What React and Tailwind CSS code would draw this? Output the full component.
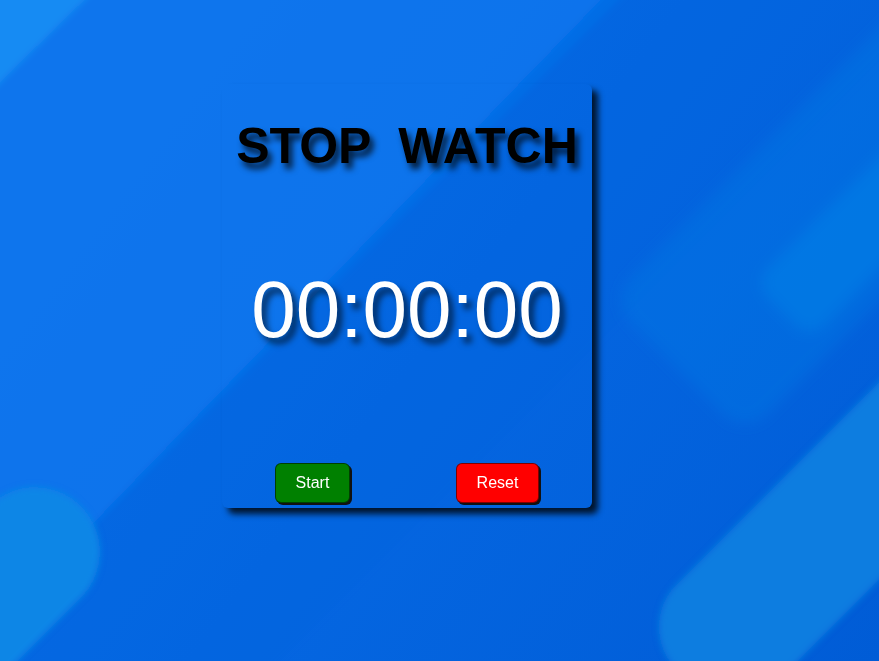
import React from 'react';

const Backdrop = () => (
  <svg
    className="absolute inset-0 h-full w-full"
    viewBox="0 0 879 661"
    preserveAspectRatio="none"
    aria-hidden="true"
  >
    <defs>
      <linearGradient id="base" x1="0" y1="0" x2="879" y2="661" gradientUnits="userSpaceOnUse">
        <stop offset="0" stopColor="#0a74ec" />
        <stop offset="0.5" stopColor="#0567e2" />
        <stop offset="1" stopColor="#005cd6" />
      </linearGradient>
      <filter id="soft" x="-20%" y="-20%" width="140%" height="140%">
        <feGaussianBlur stdDeviation="3" />
      </filter>
      <filter id="haze" x="-50%" y="-50%" width="200%" height="200%">
        <feGaussianBlur stdDeviation="7" />
      </filter>
    </defs>
    <rect width="879" height="661" fill="url(#base)" />
    <g filter="url(#soft)">
      {/* light wedge top-left */}
      <polygon points="-20,-20 640,-20 -20,640" fill="#0a76ee" opacity="0.8" />
      <polygon points="-20,-20 105,-20 -20,102" fill="#1a93f4" opacity="0.75" />
      {/* darker band top-right */}
      <polygon points="620,-20 940,-20 940,0 0,940 -20,940 -20,640" fill="#0060dc" opacity="0.35" />
    </g>
    {/* faint bands on the right */}
    <g filter="url(#haze)">
      <rect x="-96" y="-96" width="600" height="192" rx="30" fill="#0a7ce4" opacity="0.35"
        transform="translate(745,300) rotate(-45)" />
      <rect x="-40" y="-40" width="600" height="80" rx="20" fill="#0a8ae8" opacity="0.4"
        transform="translate(810,283) rotate(-45)" />
    </g>
    <g filter="url(#soft)">
      {/* pill bottom-right */}
      <rect x="-70" y="-70" width="700" height="140" rx="60" fill="#0a7de0"
        transform="translate(733,627) rotate(-45)" />
      {/* blob bottom-left */}
      <rect x="-65" y="-65" width="500" height="130" rx="65" fill="#0a86e6"
        transform="translate(35,552) rotate(135)" />
    </g>
  </svg>
);

const App = () => {
  return (
    <div className="relative h-screen min-h-[661px] w-full overflow-hidden font-['Liberation_Sans',Arial,sans-serif]">
      <Backdrop />

      <div className="relative pl-[222px] pt-[84px]">
        <div className="flex h-[424px] w-[370px] flex-col items-center rounded-md shadow-[6px_6px_6px_rgba(0,0,0,0.8)]">
          <h1 className="mt-[37px] whitespace-pre text-[50px] font-bold leading-none text-black [text-shadow:4px_6px_6px_rgba(0,0,0,0.75)]">
            STOP  WATCH
          </h1>

          <div className="mt-[99px] text-[80px] leading-none text-white [text-shadow:5px_6px_6px_rgba(0,0,0,0.6)]">
            00:00:00
          </div>

          <div className="mt-[113px] flex w-full justify-around">
            <button className="h-10 rounded-md border border-black/50 bg-[#008000] px-5 text-base text-white shadow-[2px_2px_0_#111]">
              Start
            </button>
            <button className="h-10 rounded-md border border-black/50 bg-[#ff0000] px-5 text-base text-white shadow-[2px_2px_0_#111]">
              Reset
            </button>
          </div>
        </div>
      </div>
    </div>
  );
};

export default App;
